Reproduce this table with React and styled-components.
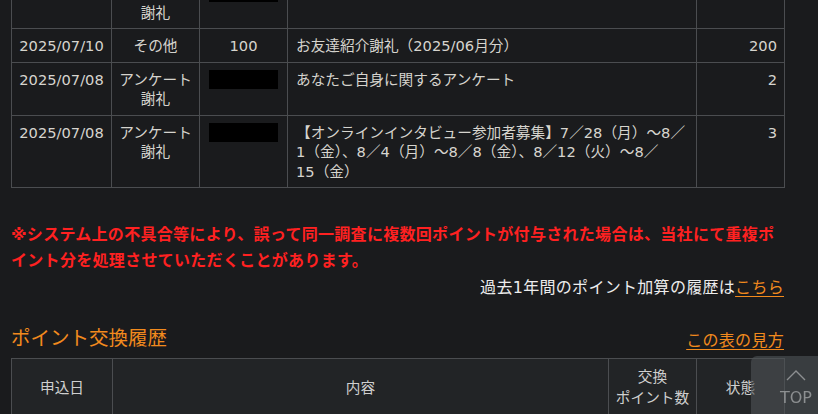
import React from 'react'
import styled, { createGlobalStyle } from 'styled-components'

const GlobalStyle = createGlobalStyle`
 html, body {
  margin: 0;
  padding: 0;
  background: #1a1b1d;
  overflow: hidden;
 }
 body {
  font-family: 'DejaVu Sans', 'Noto Sans CJK JP', sans-serif;
  color: #d2d2d2;
 }
`

const history = [
 { id: 1, date: '2025/07/14', kind: ['アンケート', '謝礼'], code: true, title: '', point: '' },
 { id: 2, date: '2025/07/10', kind: ['その他'], code: false, num: '100', title: 'お友達紹介謝礼（2025/06月分）', point: '200' },
 { id: 3, date: '2025/07/08', kind: ['アンケート', '謝礼'], code: true, title: 'あなたご自身に関するアンケート', point: '2' },
 {
  id: 4,
  date: '2025/07/08',
  kind: ['アンケート', '謝礼'],
  code: true,
  title: '【オンラインインタビュー参加者募集】7／28（月）～8／1（金）、8／4（月）～8／8（金）、8／12（火）～8／\n15（金）',
  point: '3',
 },
]

function App() {
 return (
  <>
   <GlobalStyle />
   <Page>
    <Table>
     <colgroup>
      <col style={{ width: 100 }} />
      <col style={{ width: 88 }} />
      <col style={{ width: 88 }} />
      <col style={{ width: 409 }} />
      <col style={{ width: 88 }} />
     </colgroup>
     <tbody>
      {history.map((row) => (
       <tr key={row.id}>
        <Cell align="center">{row.date}</Cell>
        <Cell align="center">
         {row.kind.map((k, i) => (
          <div key={i}>{k}</div>
         ))}
        </Cell>
        <Cell align="center">{row.code ? <Masked /> : row.num}</Cell>
        <Cell align="left">{row.title}</Cell>
        <Cell align="right">{row.point}</Cell>
       </tr>
      ))}
     </tbody>
    </Table>

    <Notice>
     ※システム上の不具合等により、誤って同一調査に複数回ポイントが付与された場合は、当社にて重複ポイント分を処理させていただくことがあります。
    </Notice>
    <PastLink>
     過去1年間のポイント加算の履歴は<Link href="#">こちら</Link>
    </PastLink>

    <SectionHead>
     <Title>ポイント交換履歴</Title>
     <Link href="#">この表の見方</Link>
    </SectionHead>

    <Table>
     <colgroup>
      <col style={{ width: 101 }} />
      <col style={{ width: 496 }} />
      <col style={{ width: 88 }} />
      <col style={{ width: 88 }} />
     </colgroup>
     <thead>
      <tr>
       <Head>申込日</Head>
       <Head>内容</Head>
       <Head>
        交換
        <br />
        ポイント数
       </Head>
       <Head>状態</Head>
      </tr>
     </thead>
    </Table>
   </Page>

   <TopButton href="#">
    <svg width="20" height="11" viewBox="0 0 20 11">
     <polyline points="1,10 10,1 19,10" fill="none" stroke="#8c8f91" strokeWidth="1.4" />
    </svg>
    <span>TOP</span>
   </TopButton>
  </>
 )
}

export default App

const Page = styled.main`
 width: 773px;
 margin: -25px 0 0 11px;
`

const Table = styled.table`
 width: 773px;
 table-layout: fixed;
 border-collapse: collapse;
 font-size: 14.67px;
 line-height: 19.5px;
`

const Cell = styled.td`
 border: 1px solid #4b4d50;
 padding: ${(p) =>
  p.align === 'left' ? '7px 6px 6px 8px' : p.align === 'right' ? '7px 7px 6px 6px' : '7px 3px 6px'};
 vertical-align: top;
 text-align: ${(p) => p.align};
 color: #d6d4ce;
 white-space: ${(p) => (p.align === 'center' ? 'nowrap' : 'pre-line')};
`

const Masked = styled.span`
 display: block;
 width: 69px;
 height: 19px;
 margin: 0 auto;
 background: #000;
`

const Head = styled.th`
 border: 1px solid #4b4d50;
 background: #222426;
 padding: 7px 4px;
 height: 42px;
 font-weight: normal;
 text-align: center;
 vertical-align: middle;
 color: #cfcfcf;
 font-size: 14.67px;
 line-height: 21px;
`

const Notice = styled.p`
 margin: 34px 0 0;
 font-size: 16px;
 letter-spacing: 0.3px;
 line-height: 26px;
 font-weight: bold;
 color: #ff2121;
`

const PastLink = styled.p`
 margin: 1px 0 0;
 text-align: right;
 font-size: 16px;
 letter-spacing: 0.3px;
 line-height: 26px;
 color: #ededed;
`

const Link = styled.a`
 color: #f28a1d;
 text-decoration: underline;
 text-underline-offset: 3px;
 font-size: 16px;
 letter-spacing: 0.3px;
`

const SectionHead = styled.div`
 display: flex;
 justify-content: space-between;
 align-items: center;
 margin-top: 25px;
 height: 26px;
 margin-bottom: 6px;
`

const Title = styled.h2`
 margin: 0;
 font-size: 19.5px;
 font-weight: normal;
 line-height: 26px;
 color: #f28a1d;
`

const TopButton = styled.a`
 position: fixed;
 left: 751px;
 top: 356px;
 width: 90px;
 height: 70px;
 border-radius: 6px 0 0 0;
 background: rgba(78, 82, 85, 0.62);
 display: flex;
 flex-direction: column;
 align-items: center;
 padding-top: 14px;
 box-sizing: border-box;
 text-decoration: none;
 svg {
  display: block;
 }
 span {
  margin-top: 7px;
  font-family: 'DejaVu Sans', sans-serif;
  font-size: 16px;
  line-height: 20px;
  color: #8c8f91;
 }
`
